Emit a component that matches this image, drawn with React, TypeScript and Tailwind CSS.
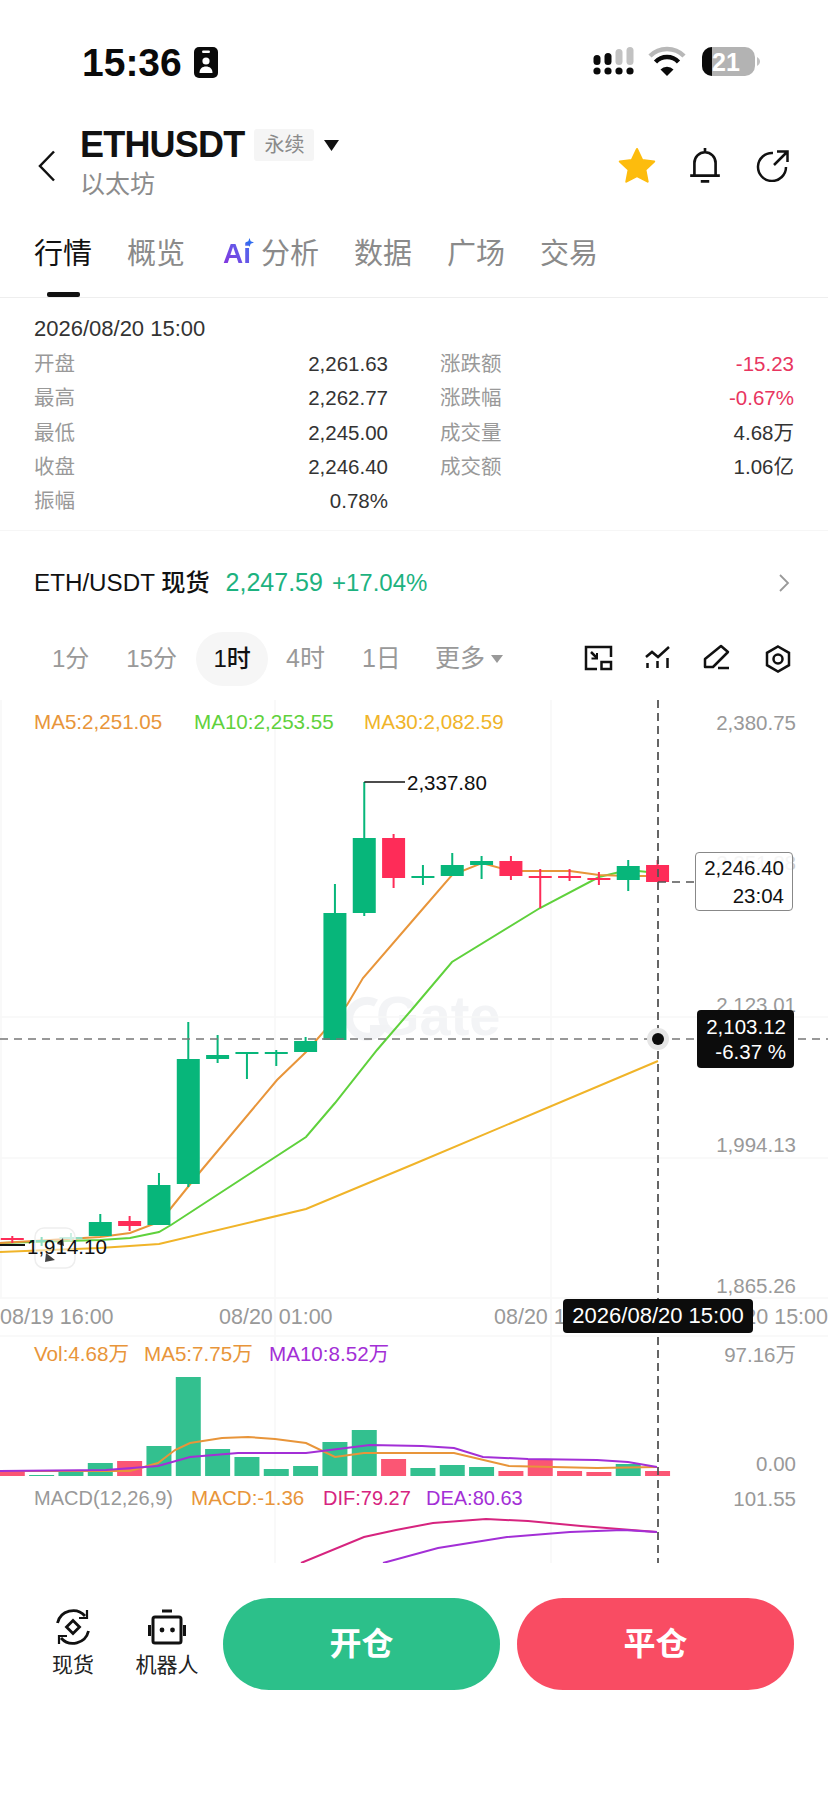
import React from "react";

const sans = "font-['Liberation_Sans','Noto_Sans_CJK_SC',sans-serif]";
const G = "#07b67a";
const R = "#fe2c58";
const BG = "#33c08f";
const BR = "#fb5674";
const ORANGE = "#e8953a";
const LIME = "#5fd13c";
const YEL = "#f0b429";
const PUR = "#a32fd6";
const MAG = "#d6247f";

const xs = Array.from({ length: 23 }, (_, i) => 12.3 + i * 29.33);

// body top, body bottom, wick top, wick bottom, colour
const candles: [number, number, number, number, string][] = [
  [1238, 1240, 1236, 1243, R],
  [1240, 1242, 1237, 1246, G],
  [1237, 1239, 1233, 1241, "#8fdcc0"],
  [1222, 1236, 1214, 1236, G],
  [1221, 1226, 1216, 1231, R],
  [1185, 1225, 1173, 1225, G],
  [1059, 1184, 1022, 1187, G],
  [1055, 1059, 1035, 1063, G],
  [1052, 1054, 1052, 1079, G],
  [1052, 1054, 1050, 1066, G],
  [1041, 1052, 1037, 1052, G],
  [913, 1040, 884, 1040, G],
  [838, 913, 782, 916, G],
  [838, 878, 834, 888, R],
  [876, 878, 865, 885, G],
  [865, 876, 853, 876, G],
  [861, 865, 856, 879, G],
  [861, 876, 856, 880, R],
  [876, 878, 869, 908, R],
  [876, 878, 869, 881, R],
  [878, 880, 872, 885, R],
  [866, 880, 860, 891, G],
  [865, 882, 860, 882, R],
];

const volumes: [number, string][] = [
  [1472, BR], [1475, BG], [1472, BG], [1463, BG], [1461, BR], [1446, BG], [1377, BG], [1449, BG],
  [1457, BG], [1469, BG], [1466, BG], [1442, BG], [1430, BG], [1459, BR], [1468, BG], [1465, BG],
  [1467, BG], [1471, BR], [1460, BR], [1471, BR], [1472, BR], [1464, BG], [1471, BR],
];

const ma5 = "0,1243 100,1237 130,1233 159,1222 171,1208 200,1172 277,1080 306,1052 347,1005 363,978 414,919 452,875 482,863 511,871 570,871 599,875 628,876 658,876";
const ma10 = "0,1243 100,1240 130,1238 159,1232 171,1225 306,1137 335,1103 377,1050 414,1007 452,962 540,908 599,877 628,870 658,873";
const ma30 = "0,1252 100,1248 159,1244 306,1209 414,1164 658,1061";
const vol5 = "0,1471 130,1471 158,1463 175,1450 190,1443 222,1438 248,1437 275,1439 306,1443 335,1457 364,1453 454,1453 509,1466 597,1468 657,1467";
const vol10 = "0,1471 106,1470 158,1466 190,1457 238,1453 306,1453 370,1445 422,1446 454,1448 483,1457 528,1459 597,1460 628,1462 657,1467";
const dif = "301,1563 364,1537 396,1530 433,1523 486,1519 528,1521 581,1526 657,1532";
const dea = "383,1563 438,1548 507,1537 570,1532 623,1530 657,1532";

function ChartDrawing() {
  return (
    <svg className="absolute inset-0" width="828" height="863" viewBox="0 700 828 863" fill="none">
      <g stroke="#f8f8f8" strokeWidth="1.5">
        <path d="M275 700V1563M551 700V1563M1 700V1298" />
        <path d="M0 1017H828M0 1158H828M0 1298H828M0 1336H828" />
      </g>
      <path d="M376 1003a18 18 0 1 0 6 26h-12" stroke="#f2f3f5" strokeWidth="8" />
      {volumes.map(([top, c], i) => (
        <rect key={i} x={xs[i] - 12.5} y={top} width="25" height={1476 - top} fill={c} />
      ))}
      <polyline points={ma30} stroke={YEL} strokeWidth="2" />
      <polyline points={ma10} stroke={LIME} strokeWidth="2" />
      <polyline points={ma5} stroke={ORANGE} strokeWidth="2" />
      {candles.map(([bt, bb, wt, wb, c], i) => (
        <g key={i} fill={c}>
          <rect x={xs[i] - 1} y={wt} width="2" height={wb - wt} />
          <rect x={xs[i] - 11.5} y={bt} width="23" height={bb - bt} />
        </g>
      ))}
      <polyline points={vol5} stroke={ORANGE} strokeWidth="2" />
      <polyline points={vol10} stroke={PUR} strokeWidth="2" />
      <polyline points={dif} stroke={MAG} strokeWidth="2" />
      <polyline points={dea} stroke={PUR} strokeWidth="2" />
      <path d="M364.3 782H405" stroke="#111" strokeWidth="1.5" />
      <path d="M0 1245H25" stroke="#111" strokeWidth="2" />
      <rect x="35" y="1228" width="40" height="40" rx="9" fill="#fff" fillOpacity="0.55" stroke="#eeeeee" strokeWidth="1.5" />
      <path d="M57 1244l6-6 1 8zM46 1253l9 7-10 2z" fill="#444" />
      <path d="M0 1039H828" stroke="#777" strokeWidth="1.3" strokeDasharray="8 6" />
      <path d="M658 882H695" stroke="#555" strokeWidth="1.3" strokeDasharray="8 6" />
      <path d="M658 700V1563" stroke="#555" strokeWidth="1.8" strokeDasharray="8 5" />
      <circle cx="658" cy="1039" r="11" fill="#e6e6e6" />
      <circle cx="658" cy="1039" r="6" fill="#0c0c0c" />
    </svg>
  );
}

function YLabel({ y, children, cls = "text-[#999]" }: { y: string; children: React.ReactNode; cls?: string }) {
  return <div className={`absolute right-[32px] leading-6 text-[20.5px] ${y} ${cls}`}>{children}</div>;
}

function Chart() {
  return (
    <div className="relative h-[863px] overflow-hidden text-[20px]">
      <div className="absolute left-[376px] top-[285px] text-[56px] leading-[62px] font-bold text-[#f3f4f6]">Gate</div>
      <ChartDrawing />
      <div className="relative h-[598px] pt-[10px] pl-[34px] flex text-[20.6px] leading-6">
        <span className="w-[160px] text-[#e8953a]">MA5:2,251.05</span>
        <span className="w-[170px] text-[#5fd13c]">MA10:2,253.55</span>
        <span className="text-[#f0b429]">MA30:2,082.59</span>
      </div>
      <div className="relative h-[38px] text-[21.5px] text-[#999] leading-[38px]">
        <span className="absolute left-0">08/19 16:00</span>
        <span className="absolute left-[219px]">08/20 01:00</span>
        <span className="absolute left-[494px]">08/20 10:00</span>
        <span className="absolute right-0">08/20 15:00</span>
      </div>
      <div className="relative h-[144px] pt-[6px] pl-[34px] flex text-[20.6px] leading-6">
        <span className="w-[110px] text-[#e8953a]">Vol:4.68万</span>
        <span className="w-[125px] text-[#e8953a]">MA5:7.75万</span>
        <span className="text-[#a32fd6]">MA10:8.52万</span>
      </div>
      <div className="relative pt-[6px] pl-[34px] flex leading-6">
        <span className="w-[157px] text-[#999]">MACD(12,26,9)</span>
        <span className="w-[132px] text-[20.6px] text-[#e8953a]">MACD:-1.36</span>
        <span className="w-[103px] text-[#d6247f]">DIF:79.27</span>
        <span className="text-[#a32fd6]">DEA:80.63</span>
      </div>

      <YLabel y="top-[11px]">2,380.75</YLabel>
      <YLabel y="top-[151px]" cls="text-[#ccc]">2,251.88</YLabel>
      <YLabel y="top-[293px]">2,123.01</YLabel>
      <YLabel y="top-[433px]">1,994.13</YLabel>
      <YLabel y="top-[574px]">1,865.26</YLabel>
      <YLabel y="top-[643px]">97.16万</YLabel>
      <YLabel y="top-[752px]">0.00</YLabel>
      <YLabel y="top-[787px]">101.55</YLabel>

      <div className="absolute left-[407px] top-[71px] leading-6 text-[20.5px] text-[#111]">2,337.80</div>
      <div className="absolute left-[27px] top-[535px] leading-6 text-[20.5px] text-[#111]">1,914.10</div>

      <div className="absolute left-[695px] top-[152px] w-[98px] h-[59px] bg-white/80 border border-[#888] rounded-[4px] pr-[8px] pt-[1px] text-right text-[20.5px] leading-[28px] text-[#111]">
        <div>2,246.40</div>
        <div>23:04</div>
      </div>
      <div className="absolute left-[697px] top-[310px] w-[97px] h-[58px] bg-[#0c0c0c] rounded-[4px] pr-[8px] pt-[4px] text-right text-[20.5px] leading-[25px] text-white">
        <div>2,103.12</div>
        <div>-6.37 %</div>
      </div>
      <div className="absolute left-[563px] top-[599px] w-[190px] h-[34px] bg-[#0c0c0c] rounded-[4px] text-center text-[22px] leading-[34px] text-white">
        2026/08/20 15:00
      </div>
    </div>
  );
}

function StatusBar() {
  return (
    <div className="h-[124px] flex items-center pl-[82px] pr-[68px]">
      <span className="text-[39px] leading-none font-bold text-[#0a0a0a]">15:36</span>
      <svg className="ml-[12px]" width="24" height="31" viewBox="0 0 24 31">
        <rect width="24" height="31" rx="5" fill="#0a0a0a" />
        <rect x="8" y="3.5" width="8" height="2.5" rx="1.2" fill="#fff" />
        <circle cx="12" cy="14" r="3.6" fill="#fff" />
        <path d="M5.5 26c0-4.5 3-6.5 6.5-6.5s6.500 2 6.500 6.500z" fill="#fff" />
      </svg>
      <div className="flex-1" />
      <svg width="170" height="32" viewBox="590 46 170 32">
        <g fill="#0a0a0a">
          <circle cx="597" cy="71" r="3.6" /><circle cx="608" cy="71" r="3.6" /><circle cx="619" cy="71" r="3.6" /><circle cx="630" cy="71" r="3.6" />
          <rect x="593.500" y="55" width="7" height="10" rx="3.5" />
          <rect x="604.500" y="53" width="7" height="12" rx="3.5" />
        </g>
        <g fill="#c2c2c2">
          <rect x="615.500" y="49" width="7" height="16" rx="3.5" />
          <rect x="626.500" y="47" width="7" height="18" rx="3.5" />
        </g>
        <path d="M650 56a24 24 0 0 1 34 0" stroke="#b8b8b8" strokeWidth="4.500" fill="none" />
        <path d="M655.500 62a16 16 0 0 1 23 0" stroke="#0a0a0a" strokeWidth="4.500" fill="none" />
        <path d="M667 76l-6.500-6.500a9 9 0 0 1 13 0z" fill="#0a0a0a" />
        <rect x="702" y="47" width="53" height="29" rx="10" fill="#b3b3b3" />
        <path d="M712 47h-0a10 10 0 0 0-10 10v9a10 10 0 0 0 10 10h0z" fill="#0a0a0a" />
        <path d="M757 57c2 1 3 3 3 4.500s-1 3.500-3 4.500z" fill="#c2c2c2" />
      </svg>
      <span className="absolute left-[712px] top-[47px] h-[30px] leading-[30px] text-[25px] font-bold text-white">21</span>
    </div>
  );
}

function Header() {
  return (
    <div className="h-[82px] flex pl-[38px] pr-[38px]">
      <svg className="mt-[26px]" width="18" height="32" viewBox="0 0 18 32" fill="none">
        <path d="M16 1.500L2 16l14 14.500" stroke="#111" strokeWidth="2.500" />
      </svg>
      <div className="ml-[24px]">
        <div className="flex items-center h-[44px] mt-[-1px]">
          <span className="text-[36px] leading-none font-bold text-[#111] tracking-[-0.8px]">ETHUSDT</span>
          <span className="ml-[10px] w-[60px] h-[32px] bg-[#f5f5f5] rounded-[3px] text-center text-[20px] leading-[32px] text-[#8a8a8a]">永续</span>
          <svg className="ml-[10px]" width="15" height="11" viewBox="0 0 15 11"><path d="M0 0h15L7.500 11z" fill="#111" /></svg>
        </div>
        <div className="text-[25px] leading-[30px] text-[#8c8c8c] mt-[2px]">以太坊</div>
      </div>
      <div className="flex-1" />
      <div className="flex items-center h-[82px]">
        <svg width="38" height="36" viewBox="0 0 38 36">
          <path d="M19 2l5.200 10.900 12 1.600-8.800 8.300 2.300 11.900L19 29l-10.700 5.700 2.300-11.900-8.800-8.300 12-1.600z" fill="#fdbc0d" stroke="#fdbc0d" strokeWidth="2" strokeLinejoin="round" />
        </svg>
        <svg className="ml-[33px]" width="32" height="36" viewBox="0 0 30 34" fill="none" stroke="#111" strokeWidth="2.500">
          <path d="M15 1v4M5 27V15a10 10 0 0 1 20 0v12M1 27h28M11 32.500h8" />
        </svg>
        <svg className="ml-[35px]" width="34" height="34" viewBox="0 0 34 34" fill="none" stroke="#111" strokeWidth="2.500">
          <path d="M17 5A14 14 0 1 0 30 19M18 17L31 4M21 3.500h10.500V14" />
        </svg>
      </div>
    </div>
  );
}

function Tabs() {
  const rest = ["数据", "广场", "交易"];
  return (
    <div className="relative h-[92px] flex items-start pl-[34px] gap-[35px] border-b border-[#eeeeee] text-[29px] leading-[36px] pt-[30px] text-[#8a8a8a]">
      <div className="relative text-[#111]">
        行情
        <div className="absolute left-[13px] top-[56px] w-[33px] h-[5px] rounded-[2px] bg-[#111]" />
      </div>
      <div>概览</div>
      <div className="flex items-center ml-[3px]">
        <span className="relative mr-[10px] text-[28px] font-bold bg-gradient-to-tr from-[#8a22dc] to-[#2a70f0] bg-clip-text text-transparent">
          Ai
          <svg className="absolute right-[-3px] top-[2px]" width="9" height="9" viewBox="0 0 10 10"><path d="M5 0l1.300 3.700L10 5 6.300 6.300 5 10 3.700 6.300 0 5l3.700-1.300z" fill="#2f6cf0" /></svg>
        </span>
        <span>分析</span>
      </div>
      {rest.map((t) => <div key={t}>{t}</div>)}
    </div>
  );
}

function Info() {
  const left = [["开盘", "2,261.63"], ["最高", "2,262.77"], ["最低", "2,245.00"], ["收盘", "2,246.40"], ["振幅", "0.78%"]];
  const right: [string, string, string][] = [
    ["涨跌额", "-15.23", "text-[#e8355f]"], ["涨跌幅", "-0.67%", "text-[#e8355f]"],
    ["成交量", "4.68万", "text-[#333]"], ["成交额", "1.06亿", "text-[#333]"],
  ];
  return (
    <div className="pt-[14px] pb-[11px] px-[34px] border-b border-[#f6f6f6] text-[20.5px]">
      <div className="h-[35px] text-[22px] leading-[34px] text-[#333]">2026/08/20 15:00</div>
      <div className="flex">
        <div className="w-[354px]">
          {left.map(([a, b]) => (
            <div key={a} className="h-[34.400px] flex justify-between items-center">
              <span className="text-[#999]">{a}</span><span className="text-[#333]">{b}</span>
            </div>
          ))}
        </div>
        <div className="ml-[52px] flex-1">
          {right.map(([a, b, c]) => (
            <div key={a} className="h-[34.400px] flex justify-between items-center">
              <span className="text-[#999]">{a}</span><span className={c}>{b}</span>
            </div>
          ))}
        </div>
      </div>
    </div>
  );
}

function Spot() {
  return (
    <div className="h-[101px] pt-[3px] pl-[34px] pr-[38px] flex items-center text-[24.200px]">
      <span className="font-medium text-[#111]">ETH/USDT 现货</span>
      <span className="ml-[16px] text-[25px] text-[#1db27f]">2,247.59</span>
      <span className="ml-[9px] text-[24px] text-[#1db27f]">+17.04%</span>
      <div className="flex-1" />
      <svg width="12" height="20" viewBox="0 0 12 20" fill="none"><path d="M2 2l8 8-8 8" stroke="#999" strokeWidth="1.800" /></svg>
    </div>
  );
}

function Timeframes() {
  return (
    <div className="h-[54px] mb-[14px] flex items-center text-[24px] text-[#999] relative">
      <span className="ml-[52px]">1分</span>
      <span className="ml-[37px]">15分</span>
      <span className="ml-[19px] w-[72px] h-[54px] leading-[54px] text-center rounded-[27px] bg-[#f6f6f6] text-[#111] font-medium">1时</span>
      <span className="ml-[18px] text-[25px]">4时</span>
      <span className="ml-[37px] text-[25px]">1日</span>
      <span className="ml-[34px] text-[25px]">更多</span>
      <svg className="ml-[6px]" width="12" height="8" viewBox="0 0 12 8"><path d="M0 0h12L6 8z" fill="#999" /></svg>
      <div className="flex-1" />
      <div className="flex items-center gap-[30px] pr-[35px]">
        <svg width="30" height="30" viewBox="0 0 30 30" fill="none" stroke="#111" strokeWidth="2.500">
          <path d="M28 13V3H3v22h11" /><rect x="18.500" y="18" width="9.500" height="7" /><path d="M8 8l6 6" /><path d="M14 9v5.500H8.500" strokeWidth="2" />
        </svg>
        <svg width="30" height="30" viewBox="0 0 30 30" fill="none" stroke="#111" strokeWidth="2.500">
          <path d="M3 13l6-5 6 5L26 3M4.500 19v5M14.500 17v7M24.500 14v10" />
        </svg>
        <svg width="30" height="30" viewBox="0 0 30 30" fill="none" stroke="#111" strokeWidth="2.500" strokeLinejoin="round">
          <path d="M2 23v-8L18 2l7 6-15 15zM15 24h11" />
        </svg>
        <svg width="30" height="30" viewBox="0 0 30 30" fill="none" stroke="#111" strokeWidth="2.500">
          <path d="M15 2.500l11 6.300v12.400l-11 6.300-11-6.300V8.800z" /><circle cx="15" cy="15" r="4.500" />
        </svg>
      </div>
    </div>
  );
}

function BottomBar() {
  return (
    <div className="pt-[35px] pl-[40px] pr-[34px] flex items-start">
      <div className="w-[66px] flex flex-col items-center">
        <svg className="mt-[10px]" width="38" height="38" viewBox="0 0 38 38" fill="none" stroke="#111" strokeWidth="2.800">
          <path d="M3.500 15A16 16 0 0 1 31 8M34.500 23A16 16 0 0 1 7 30" />
          <path d="M33 2v8h-8M5 36v-8h8" strokeWidth="2.200" />
          <path d="M19 12.500l6.500 6.500-6.500 6.500-6.500-6.500z" />
        </svg>
        <div className="text-[21px] leading-6 text-[#222] mt-[7px]">现货</div>
      </div>
      <div className="ml-[28px] w-[66px] flex flex-col items-center">
        <svg className="mt-[10px]" width="38" height="38" viewBox="0 0 38 38" fill="none" stroke="#111" strokeWidth="3">
          <path d="M14 3h10" /><rect x="5" y="9" width="28" height="26" rx="2" /><path d="M1.500 17v11M36.500 17v11" />
          <circle cx="14" cy="22" r="2.400" fill="#111" stroke="none" /><circle cx="24.500" cy="22" r="2.400" fill="#111" stroke="none" />
        </svg>
        <div className="text-[21px] leading-6 text-[#222] mt-[7px] whitespace-nowrap">机器人</div>
      </div>
      <button className="ml-[23px] w-[277px] h-[92px] rounded-[46px] bg-[#2cc08a] text-white text-[32px] font-bold">开仓</button>
      <button className="ml-[17px] w-[277px] h-[92px] rounded-[46px] bg-[#f94c63] text-white text-[32px] font-bold">平仓</button>
    </div>
  );
}

export default function App() {
  return (
    <div className={`relative w-[828px] h-[1796px] overflow-hidden bg-white ${sans}`}>
      <StatusBar />
      <Header />
      <Tabs />
      <Info />
      <Spot />
      <Timeframes />
      <Chart />
      <BottomBar />
    </div>
  );
}
